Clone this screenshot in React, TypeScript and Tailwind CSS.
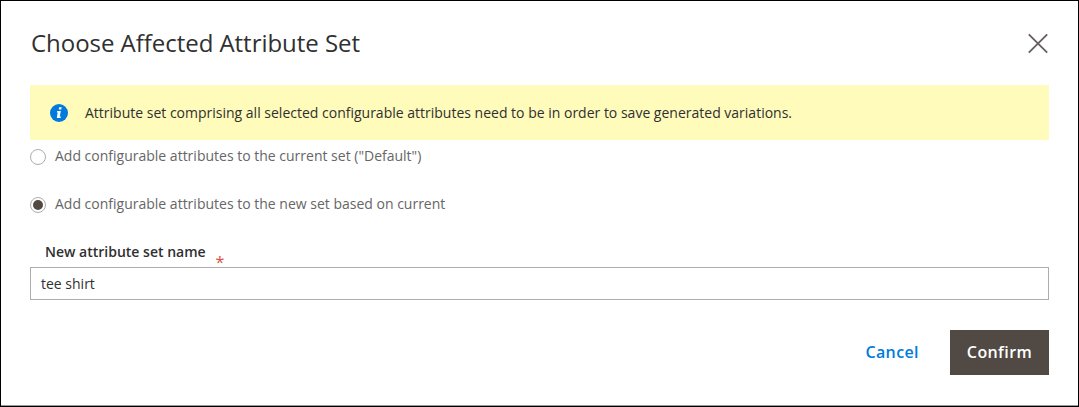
import React from "react";

function Radio({ checked }: { checked?: boolean }) {
  return (
    <span className="mt-px flex size-4 shrink-0 items-center justify-center rounded-full border border-[#adadad] bg-white">
      {checked && <span className="size-2.5 rounded-full bg-[#514943]" />}
    </span>
  );
}

export default function App() {
  return (
    <div className="h-[407px] w-[1079px] border border-black bg-white px-[29px] pt-[25px] font-['Open_Sans',sans-serif] text-sm text-[#303030] shadow-[inset_0_-1px_0_#999]">
      <header className="flex h-[33px] items-center justify-between">
        <h1 className="pl-px text-2xl leading-[33px] tracking-[-0.04px] text-[#303030]">Choose Affected Attribute Set</h1>
        <svg className="size-[22px]" viewBox="0 0 22 22" fill="none" stroke="#686064" strokeWidth="1.9">
          <path d="M1.8 2.3 20.2 20.7M20.2 2.3 1.8 20.7" />
        </svg>
      </header>
      <div className="mt-[26px] flex h-[55px] items-center bg-[#fffbbb] pl-5">
        <svg className="size-[18px]" viewBox="0 0 18 18">
          <circle cx="9" cy="9" r="9" fill="#007bdb" />
          <path d="M9.2 3.2h2.5l-.5 2.2H8.7zM7.2 7h3.7L9.7 12.6h1.2l-.3 1.3H6.8l.9-5.5H6.9z" fill="#fff" />
        </svg>
        <p className="ml-[17px]">Attribute set comprising all selected configurable attributes need to be in order to save generated variations.</p>
      </div>
      <div className="mt-[6px] flex h-5 items-center gap-[9px] text-[#666]">
        <Radio />
        <span>Add configurable attributes to the current set ("Default")</span>
      </div>
      <div className="mt-7 flex h-5 items-center gap-[9px] text-[#666]">
        <Radio checked />
        <span>Add configurable attributes to the new set based on current</span>
      </div>
      <div className="mt-7 flex h-[25px] items-start pl-[15px]">
        <span className="font-semibold leading-5">New attribute set name</span>
        <span className="ml-[10px] mt-[10px] text-base leading-5 text-[#e04f3a]">*</span>
      </div>
      <div className="flex h-[33px] items-center border border-[#adadad] px-[10px]">tee shirt</div>
      <footer className="mt-[30px] flex h-[45px] items-center justify-end text-base font-semibold tracking-[0.4px]">
        <span className="pb-0.5 text-[#007bdb]">Cancel</span>
        <span className="ml-[31px] flex h-[45px] w-[99px] items-center justify-center bg-[#514943] pb-0.5 text-white">Confirm</span>
      </footer>
    </div>
  );
}
